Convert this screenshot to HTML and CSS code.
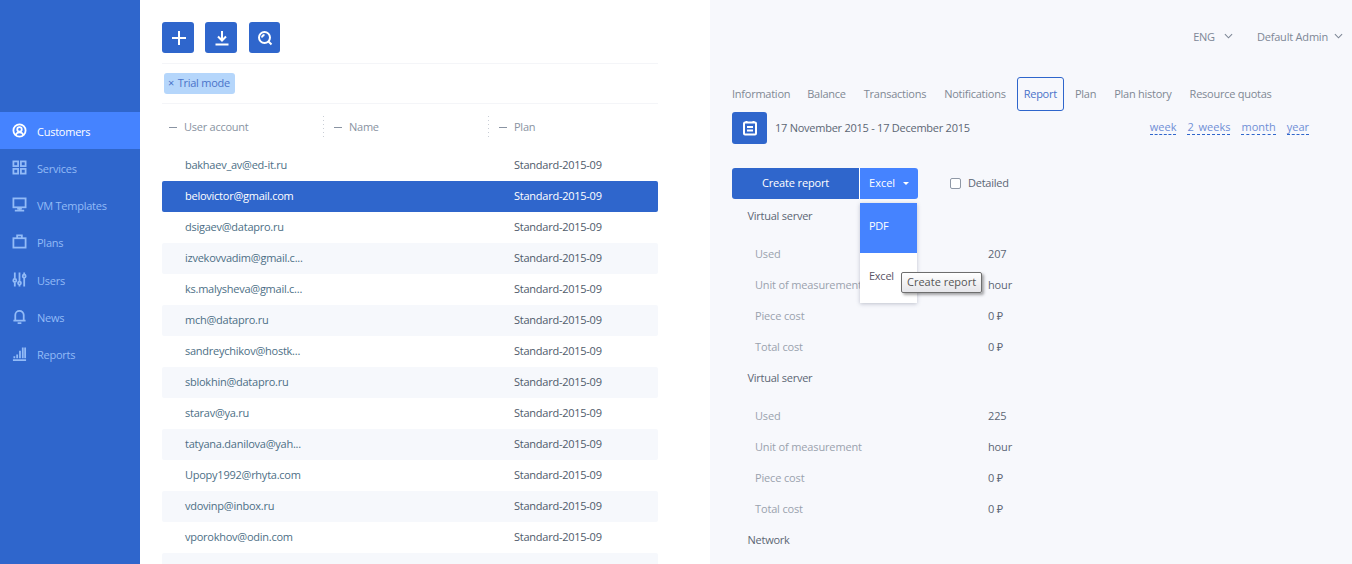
FILE: index.html
```html
<!DOCTYPE html>
<html lang="en">
<head>
    <meta charset="UTF-8">
    <title>Customers</title>
    <link rel="stylesheet" href="styles.css">
</head>
<body>
    <div class="app">
        <nav class="sidebar">
            <a class="nav-item active">
                <svg viewBox="0 0 16 16"><circle cx="8" cy="8" r="6.500"/><circle cx="8" cy="6.800" r="2.400"/><path d="M3.800 13c.8-2 2.300-3 4.200-3s3.400 1 4.200 3"/></svg>
                Customers
            </a>
            <a class="nav-item">
                <svg viewBox="0 0 16 16"><rect x="1.500" y="1.500" width="5" height="5"/><rect x="9.500" y="1.500" width="5" height="5"/><rect x="1.500" y="9.500" width="5" height="5"/><rect x="9.500" y="9.500" width="5" height="5"/></svg>
                Services
            </a>
            <a class="nav-item">
                <svg viewBox="0 0 16 16"><rect x="1.500" y="1.500" width="13" height="9.500"/><path d="M8 11v3M3 14.500h10M5.500 12.500h5"/></svg>
                VM Templates
            </a>
            <a class="nav-item">
                <svg viewBox="0 0 16 16"><rect x="1.500" y="4.500" width="13" height="10"/><path d="M5.500 4.500v-3h5v3"/></svg>
                Plans
            </a>
            <a class="nav-item">
                <svg viewBox="0 0 16 16"><path d="M3 .5v6.500M3 11v4.500M8 .5v9.500M8 13.500v2M13 .5v2M13 6.500v9"/><circle cx="3" cy="9" r="1.600"/><circle cx="8" cy="11.800" r="1.600"/><circle cx="13" cy="4.500" r="1.600"/></svg>
                Users
            </a>
            <a class="nav-item">
                <svg viewBox="0 0 16 16"><path d="M3.500 12V6.500a4.500 4.500 0 0 1 9 0V12M1.500 12.500h13M6 15h4"/></svg>
                News
            </a>
            <a class="nav-item">
                <svg viewBox="0 0 16 16"><path d="M1 15h14M2.500 13v-2M5.500 13V9M8.500 13V5M11.500 13V1.500M14 13V1.500"/></svg>
                Reports
            </a>
        </nav>

        <main class="list-panel">
            <div class="toolbar">
                <button class="icon-btn"><svg viewBox="0 0 16 16"><path d="M8 1v14M1 8h14"/></svg></button>
                <button class="icon-btn"><svg viewBox="0 0 16 16"><path d="M8 1v9M4 6.500l4 4 4-4M1.500 14.500h13"/></svg></button>
                <button class="icon-btn"><svg viewBox="0 0 16 16"><circle cx="7.500" cy="7.500" r="5.500"/><path d="M11.500 11.500l3 3M5 7.500a2.500 2.500 0 0 1 2.500-2.500"/></svg></button>
            </div>
            <div class="filters">
                <span class="tag"><span class="tag-x">×</span> Trial mode</span>
            </div>
            <div class="table-head">
                <div class="th">User account</div>
                <div class="th">Name</div>
                <div class="th">Plan</div>
            </div>
            <div class="row"><span class="account">bakhaev_av@ed-it.ru</span><span></span><span class="plan">Standard-2015-09</span></div>
            <div class="row selected"><span class="account">belovictor@gmail.com</span><span></span><span class="plan">Standard-2015-09</span></div>
            <div class="row"><span class="account">dsigaev@datapro.ru</span><span></span><span class="plan">Standard-2015-09</span></div>
            <div class="row"><span class="account">izvekovvadim@gmail.c...</span><span></span><span class="plan">Standard-2015-09</span></div>
            <div class="row"><span class="account">ks.malysheva@gmail.c...</span><span></span><span class="plan">Standard-2015-09</span></div>
            <div class="row"><span class="account">mch@datapro.ru</span><span></span><span class="plan">Standard-2015-09</span></div>
            <div class="row"><span class="account">sandreychikov@hostk...</span><span></span><span class="plan">Standard-2015-09</span></div>
            <div class="row"><span class="account">sblokhin@datapro.ru</span><span></span><span class="plan">Standard-2015-09</span></div>
            <div class="row"><span class="account">starav@ya.ru</span><span></span><span class="plan">Standard-2015-09</span></div>
            <div class="row"><span class="account">tatyana.danilova@yah...</span><span></span><span class="plan">Standard-2015-09</span></div>
            <div class="row"><span class="account">Upopy1992@rhyta.com</span><span></span><span class="plan">Standard-2015-09</span></div>
            <div class="row"><span class="account">vdovinp@inbox.ru</span><span></span><span class="plan">Standard-2015-09</span></div>
            <div class="row"><span class="account">vporokhov@odin.com</span><span></span><span class="plan">Standard-2015-09</span></div>
            <div class="row"></div>
        </main>

        <section class="detail">
            <header class="topbar">
                <span class="top-link">ENG <svg class="chev" viewBox="0 0 10 6"><path d="M1 1l4 4 4-4"/></svg></span>
                <span class="top-link">Default Admin <svg class="chev" viewBox="0 0 10 6"><path d="M1 1l4 4 4-4"/></svg></span>
            </header>
            <div class="tabs">
                <a class="tab">Information</a>
                <a class="tab">Balance</a>
                <a class="tab">Transactions</a>
                <a class="tab">Notifications</a>
                <a class="tab current">Report</a>
                <a class="tab">Plan</a>
                <a class="tab">Plan history</a>
                <a class="tab">Resource quotas</a>
            </div>
            <div class="period">
                <button class="icon-btn cal"><svg viewBox="0 0 16 16"><rect x="2" y="2.500" width="12" height="12" rx="1"/><path d="M4.500 1v2M11.500 1v2M5 7h6M5 10.500h6"/></svg></button>
                <span class="dates">17 November 2015 - 17 December 2015</span>
                <div class="ranges">
                    <a>week</a>
                    <a>2 weeks</a>
                    <a>month</a>
                    <a>year</a>
                </div>
            </div>
            <div class="actions">
                <div class="split">
                    <button class="create">Create report</button>
                    <button class="format">Excel <i class="caret"></i></button>
                    <div class="menu">
                        <div class="menu-item on">PDF</div>
                        <div class="menu-item">Excel</div>
                    </div>
                    <div class="tooltip">Create report</div>
                </div>
                <label class="check"><i class="box"></i>Detailed</label>
            </div>
            <div class="group">Virtual server</div>
            <div class="prop"><span>Used</span><b>207</b></div>
            <div class="prop"><span>Unit of measurement</span><b>hour</b></div>
            <div class="prop"><span>Piece cost</span><b>0 ₽</b></div>
            <div class="prop"><span>Total cost</span><b>0 ₽</b></div>
            <div class="group">Virtual server</div>
            <div class="prop"><span>Used</span><b>225</b></div>
            <div class="prop"><span>Unit of measurement</span><b>hour</b></div>
            <div class="prop"><span>Piece cost</span><b>0 ₽</b></div>
            <div class="prop"><span>Total cost</span><b>0 ₽</b></div>
            <div class="group">Network</div>
        </section>
    </div>
</body>
</html>
```

FILE: styles.css
```css
* {
    box-sizing: border-box;
}
html, body {
    margin: 0;
    height: 564px;
    overflow: hidden;
}
body {
    font-family: "Open Sans", "Noto Sans", sans-serif;
    font-size: 11px;
    letter-spacing: -.25px;
    color: #4f5b6b;
    background: #fff;
}
.app {
    display: grid;
    grid-template-columns: 140px 570px 642px;
    height: 564px;
    overflow: hidden;
}

/* sidebar */
.sidebar {
    background: #2f66cc;
    padding-top: 112px;
}
.nav-item {
    display: flex;
    align-items: center;
    gap: 10px;
    height: 37.150px;
    padding: 2px 0 0 12px;
    color: #93bbf7;
}
.nav-item svg {
    width: 15px;
    height: 15px;
    margin-bottom: 2px;
    fill: none;
    stroke: currentColor;
    stroke-width: 1.900;
    flex: none;
}
.nav-item.active {
    background: #4583ff;
    color: #fff;
}

/* middle list */
.list-panel {
    padding: 22px 52px 0 22px;
    overflow: hidden;
}
.toolbar {
    display: flex;
    gap: 11px;
    height: 42px;
    border-bottom: 1px solid #f4f5f8;
}
.icon-btn {
    width: 32px;
    height: 31px;
    padding: 0 0 0 1px;
    border: 0;
    border-radius: 3px;
    background: #2f66cc;
    display: flex;
    align-items: center;
    justify-content: center;
}
.toolbar .icon-btn:last-child {
    width: 31px;
    margin-left: 1px;
}
.icon-btn svg {
    width: 16px;
    height: 16px;
    fill: none;
    stroke: #fff;
    stroke-width: 2;
}
.filters {
    height: 40px;
    border-bottom: 1px solid #f4f5f8;
    display: flex;
    align-items: center;
    padding-left: 2px;
}
.tag {
    background: #b5d6fb;
    color: #4a73c9;
    height: 21px;
    line-height: 20px;
    padding: 0 5px 0 4px;
    border-radius: 3px;
}
.tag-x {
    padding-right: 1px;
}
.table-head {
    display: grid;
    grid-template-columns: repeat(3, 165px);
    height: 46px;
    align-items: center;
    color: #8993a2;
}
.th {
    height: 23px;
    line-height: 21px;
    padding-left: 22px;
    position: relative;
}
.th::before {
    content: "";
    position: absolute;
    left: 7px;
    top: 11px;
    width: 8px;
    height: 1px;
    background: #8993a2;
}
.th::after {
    content: "";
    position: absolute;
    right: 3px;
    top: 0;
    width: 1px;
    height: 23px;
    background: repeating-linear-gradient(#c9ced6 0 1px, transparent 1px 4px);
}
.th:last-child::after {
    display: none;
}
.row {
    display: grid;
    grid-template-columns: repeat(3, 165px);
    height: 31px;
    line-height: 29px;
    border-radius: 2px;
}
.row:nth-of-type(odd) {
    background: #f6f8fc;
}
.account {
    padding-left: 23px;
    color: #4d6f86;
    white-space: nowrap;
}
.plan {
    padding-left: 22px;
    color: #4f5b6b;
    white-space: nowrap;
}
.row.selected {
    background: #2f66cc;
}
.row.selected span {
    color: #fff;
}

/* right detail */
.detail {
    background: #f7f8fc;
    padding: 0 0 0 22px;
    overflow: hidden;
}
.topbar {
    display: flex;
    justify-content: flex-end;
    gap: 24px;
    height: 77px;
    padding: 28px 9px 0 0;
    letter-spacing: -.2px;
    color: #7d8796;
}
.top-link {
    display: flex;
    align-items: center;
    height: 16px;
    gap: 6px;
}
.top-link:first-child {
    gap: 9px;
}
.chev {
    width: 9px;
    height: 6px;
    fill: none;
    stroke: #7d8796;
    stroke-width: 1.200;
}
.tabs {
    display: flex;
    height: 35px;
    align-items: flex-start;
    color: #7f8894;
}
.tab {
    padding: 0 9px;
    line-height: 34px;
}
.tab:first-child {
    padding: 0 8px 0 0;
}
.tab.current {
    border: 1px solid #2f66cc;
    border-radius: 3px;
    padding: 0 6px;
    line-height: 32px;
    color: #4a73c9;
    margin: 0 2px;
}
.period {
    display: flex;
    align-items: center;
    height: 32px;
}
.icon-btn.cal {
    width: 35px;
    height: 32px;
}
.dates {
    margin-left: 8px;
    padding-bottom: 2px;
    color: #5c6674;
}
.ranges {
    margin-left: auto;
    margin-right: 43px;
    padding-bottom: 1px;
    display: flex;
    gap: 11px;
    letter-spacing: 0;
    word-spacing: 2px;
    color: #6f8fd6;
}
.ranges a {
    line-height: 14px;
    border-bottom: 1px dashed #2f66cc;
}
.actions {
    display: flex;
    align-items: center;
    margin-top: 24px;
    height: 31px;
}
.split {
    display: flex;
    position: relative;
    height: 31px;
}
.split button {
    border: 0;
    font: inherit;
    color: #fff;
    height: 31px;
    padding: 0 0 2px;
}
.create {
    width: 128px;
    letter-spacing: -.15px;
    background: #2f66cc;
    border-radius: 3px 0 0 3px;
    border-right: 1px solid #fff !important;
}
.format {
    width: 58px;
    background: #4583ff;
    border-radius: 0 3px 3px 0;
}
.caret {
    display: inline-block;
    margin-left: 5px;
    vertical-align: 2px;
    border: 3px solid transparent;
    border-top-color: #fff;
    border-bottom: 0;
}
.menu {
    position: absolute;
    left: 128px;
    top: 35px;
    width: 57px;
    background: #fff;
    box-shadow: 0 1px 4px rgba(60, 70, 100, .3);
    z-index: 2;
}
.menu-item {
    height: 50px;
    line-height: 46px;
    padding-left: 9px;
    color: #5a5566;
}
.menu-item.on {
    background: #4583ff;
    color: #fff;
}
.tooltip {
    position: absolute;
    left: 169px;
    top: 104px;
    height: 21px;
    line-height: 18px;
    padding: 0 5px;
    white-space: nowrap;
    letter-spacing: 0;
    background: linear-gradient(#fff, #e6e6ea);
    border: 1px solid #6e6e6e;
    border-radius: 2px;
    box-shadow: 2px 2px 3px rgba(0, 0, 0, .35);
    color: #555;
    z-index: 3;
}
.check {
    display: flex;
    align-items: center;
    gap: 7px;
    margin-left: 32px;
    padding-bottom: 2px;
    color: #5c6674;
}
.box {
    width: 11px;
    height: 11px;
    margin-top: 2px;
    border: 1px solid #8f98a6;
    border-radius: 2px;
    background: #fff;
}
.group {
    height: 38px;
    line-height: 33px;
    padding-left: 15.500px;
    color: #5c6674;
}
.prop {
    display: grid;
    grid-template-columns: 233px auto;
    height: 31px;
    line-height: 33px;
    padding-left: 23px;
    letter-spacing: -.15px;
    color: #9aa2ae;
}
.prop b {
    font-weight: normal;
    color: #5c6674;
}
```
